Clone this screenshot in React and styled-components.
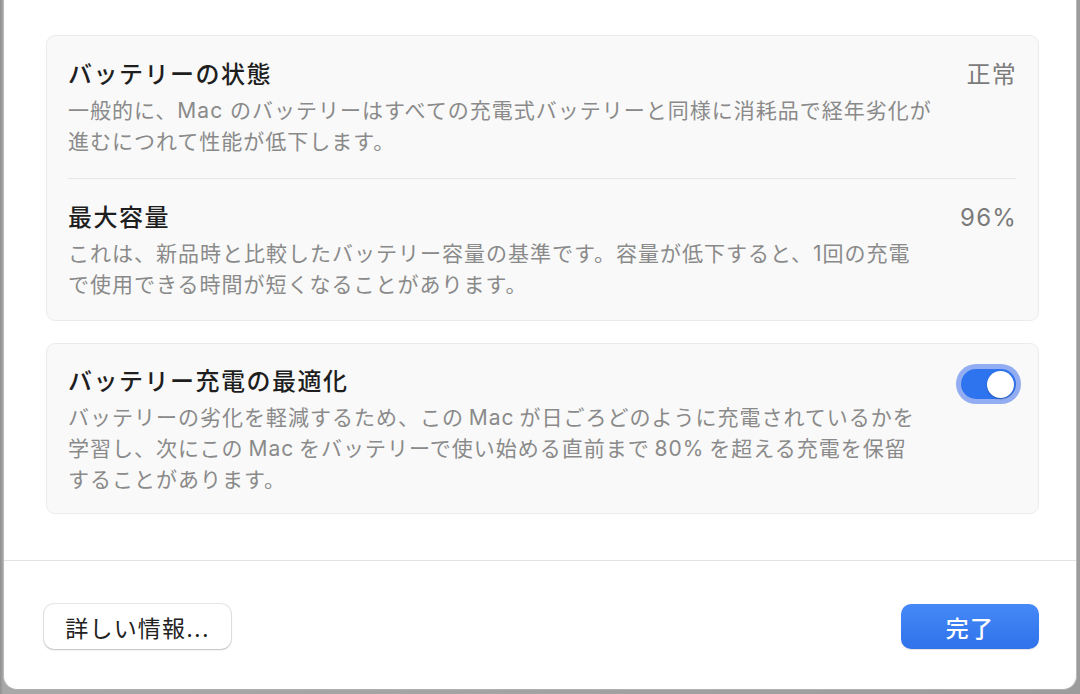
import React from 'react';
import styled, { createGlobalStyle } from 'styled-components';

const GlobalStyle = createGlobalStyle`
  html, body {
    margin: 0;
    padding: 0;
    background: #9a9a9a;
  }
  body {
    font-family: Inter, "Noto Sans CJK JP", sans-serif;
    -webkit-font-smoothing: antialiased;
  }
`;

const Screen = styled.div`
  width: 1080px;
  height: 694px;
  overflow: hidden;
  background: linear-gradient(90deg, #8f8f8f 0, #a8a8a8 3px, #9c9c9c 100%);
`;

const Window = styled.div`
  margin-left: 3px;
  width: 1074px;
  height: 690px;
  box-sizing: border-box;
  background: #fff;
  border-left: 1px solid #b9b9b9;
  border-right: 1px solid #b9b9b9;
  border-bottom: 1px solid #b0b0b0;
  border-radius: 0 0 14px 14px;
  display: flex;
  flex-direction: column;
`;

const Content = styled.div`
  padding: 35px 37px 0 42px;
  display: flex;
  flex-direction: column;
  gap: 22px;
  flex: 1;
`;

const Card = styled.div`
  background: #f9f9f9;
  border: 1px solid #ebebeb;
  border-radius: 9px;
  padding: 0 22px 0 21px;
`;

const Row = styled.div`
  display: flex;
  align-items: flex-start;
  gap: 20px;
  padding: ${p => p.$pad || '24px 0 21px'};
  & + & {
    border-top: 1px solid #e6e6e6;
  }
`;

const Texts = styled.div`
  flex: 1;
  display: flex;
  flex-direction: column;
  gap: 5px;
`;

const Title = styled.div`
  font-size: 24px;
  line-height: 30px;
  font-weight: 500;
  letter-spacing: 1.5px;
  color: #1e1e1e;
`;

const Desc = styled.div`
  font-size: 21px;
  line-height: 31px;
  letter-spacing: 1px;
  color: #8a8a8a;
  white-space: nowrap;
`;

const Value = styled.div`
  font-size: 24px;
  line-height: 30px;
  letter-spacing: 1.2px;
  color: #7b7b7b;
  margin-right: -1px;
`;

const Switch = styled.div`
  margin-top: 2px;
  width: 55px;
  height: 30px;
  border-radius: 15px;
  background: #2f74ef;
  box-shadow: 0 0 0 5px #92adf1;
  display: flex;
  align-items: center;
  justify-content: flex-end;
  padding: 0 2px;
  box-sizing: border-box;
`;

const Knob = styled.div`
  width: 27px;
  height: 27px;
  border-radius: 50%;
  background: #fff;
  box-shadow: 0 1px 2px rgba(0, 0, 0, 0.25);
`;

const Footer = styled.div`
  border-top: 1px solid #e2e2e2;
  display: flex;
  justify-content: space-between;
  align-items: center;
  padding: 43px 37px 40px 40px;
`;

const Button = styled.button`
  height: 45px;
  border-radius: 10px;
  font-family: inherit;
  font-size: 23px;
  letter-spacing: 1.2px;
  padding: 0;
  border: none;
  cursor: pointer;
  width: ${p => p.$width}px;
  color: ${p => (p.$primary ? '#fff' : '#222')};
  font-weight: ${p => (p.$primary ? 500 : 400)};
  background: ${p =>
    p.$primary ? 'linear-gradient(180deg, #4689f8 0%, #2f72ea 100%)' : '#fff'};
  box-shadow: ${p =>
    p.$primary
      ? '0 1px 1px rgba(0,0,0,0.12)'
      : '0 0 0 1px rgba(0,0,0,0.09), 0 1px 2px rgba(0,0,0,0.18)'};
`;

export default function App() {
  return (
    <Screen>
      <GlobalStyle />
      <Window>
        <Content>
          <Card>
            <Row>
              <Texts>
                <Title>バッテリーの状態</Title>
                <Desc>
                  一般的に、Mac のバッテリーはすべての充電式バッテリーと同様に消耗品で経年劣化が
                  <br />
                  進むにつれて性能が低下します。
                </Desc>
              </Texts>
              <Value>正常</Value>
            </Row>
            <Row $pad="24px 0 20px">
              <Texts>
                <Title>最大容量</Title>
                <Desc>
                  これは、新品時と比較したバッテリー容量の基準です。容量が低下すると、1回の充電
                  <br />
                  で使用できる時間が短くなることがあります。
                </Desc>
              </Texts>
              <Value>96%</Value>
            </Row>
          </Card>
          <Card>
            <Row $pad="23px 0 18px">
              <Texts>
                <Title>バッテリー充電の最適化</Title>
                <Desc>
                  バッテリーの劣化を軽減するため、この{'\u2009'}Mac{'\u2009'}が日ごろどのように充電されているかを
                  <br />
                  学習し、次にこの{'\u2009'}Mac{'\u2009'}をバッテリーで使い始める直前まで{'\u2009'}80%{'\u2009'}を超える充電を保留
                  <br />
                  することがあります。
                </Desc>
              </Texts>
              <Switch>
                <Knob />
              </Switch>
            </Row>
          </Card>
        </Content>
        <Footer>
          <Button $width={187}>詳しい情報...</Button>
          <Button $primary $width={138}>完了</Button>
        </Footer>
      </Window>
    </Screen>
  );
}
